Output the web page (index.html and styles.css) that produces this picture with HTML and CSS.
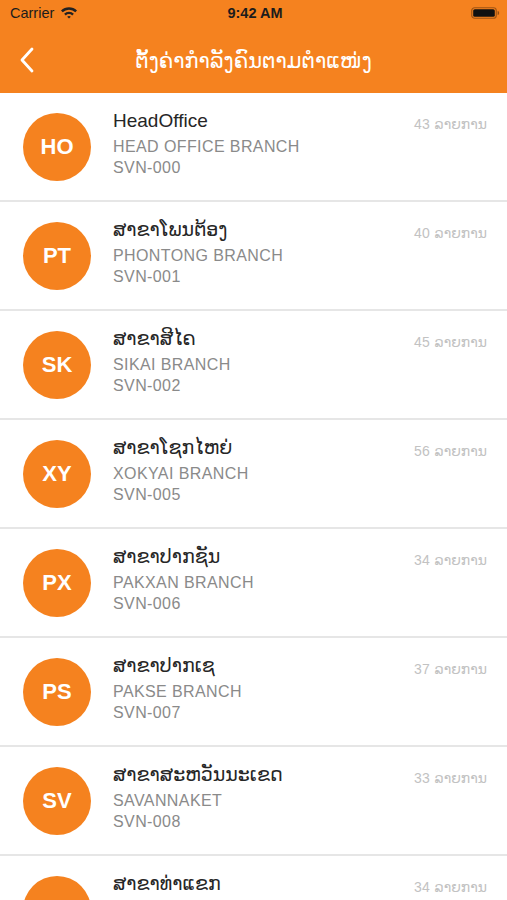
FILE: index.html
```html
<!DOCTYPE html>
<html lang="lo">
<head>
	<meta charset="UTF-8">
	<title>ຕັ້ງຄ່າກຳລັງຄົນຕາມຕຳແໜ່ງ</title>
	<link rel="stylesheet" href="styles.css">
</head>
<body>
	<div class="top">
		<div class="status-bar">
			<div class="carrier">
				Carrier
				<svg class="wifi" width="18" height="13" viewBox="0 0 18 13">
					<path d="M1 4.6 A11.5 11.5 0 0 1 17 4.6 L15.3 6.3 A9 9 0 0 0 2.7 6.3 Z" fill="#222"/>
					<path d="M4.1 7.7 A7 7 0 0 1 13.9 7.7 L12.2 9.4 A4.6 4.6 0 0 0 5.8 9.4 Z" fill="#222"/>
					<path d="M7.2 10.8 A2.6 2.6 0 0 1 10.8 10.8 L9 12.6 Z" fill="#222"/>
				</svg>
			</div>
			<div class="time">9:42 AM</div>
			<div class="battery">
				<svg width="29" height="12" viewBox="0 0 29 12">
					<rect x="0.75" y="0.75" width="24.5" height="10.5" rx="2.8" fill="none" stroke="rgba(0,0,0,0.35)" stroke-width="1.2"/>
					<rect x="2.2" y="2.2" width="21.6" height="7.6" rx="1.6" fill="#111"/>
					<path d="M26.6 4 a1.6 2 0 0 1 0 4 Z" fill="rgba(0,0,0,0.4)"/>
				</svg>
			</div>
		</div>
		<div class="nav-bar">
			<a href="" class="back">
				<svg width="16" height="26" viewBox="0 0 16 26">
					<path d="M13 2 L3 13 L13 24" fill="none" stroke="#fff" stroke-width="2.8" stroke-linecap="round" stroke-linejoin="round"/>
				</svg>
			</a>
			<div class="nav-title">ຕັ້ງຄ່າກຳລັງຄົນຕາມຕຳແໜ່ງ</div>
		</div>
	</div>

	<ul class="branch-list">
		<li class="branch">
			<div class="avatar">HO</div>
			<div class="info">
				<div class="name">HeadOffice</div>
				<div class="sub">HEAD OFFICE BRANCH</div>
				<div class="sub">SVN-000</div>
			</div>
			<div class="count">43 <span>ລາຍການ</span></div>
		</li>
		<li class="branch">
			<div class="avatar">PT</div>
			<div class="info">
				<div class="name">ສາຂາໂພນຕ້ອງ</div>
				<div class="sub">PHONTONG BRANCH</div>
				<div class="sub">SVN-001</div>
			</div>
			<div class="count">40 <span>ລາຍການ</span></div>
		</li>
		<li class="branch">
			<div class="avatar">SK</div>
			<div class="info">
				<div class="name">ສາຂາສີໄຄ</div>
				<div class="sub">SIKAI BRANCH</div>
				<div class="sub">SVN-002</div>
			</div>
			<div class="count">45 <span>ລາຍການ</span></div>
		</li>
		<li class="branch">
			<div class="avatar">XY</div>
			<div class="info">
				<div class="name">ສາຂາໂຊກໄຫຍ່</div>
				<div class="sub">XOKYAI BRANCH</div>
				<div class="sub">SVN-005</div>
			</div>
			<div class="count">56 <span>ລາຍການ</span></div>
		</li>
		<li class="branch">
			<div class="avatar">PX</div>
			<div class="info">
				<div class="name">ສາຂາປາກຊັນ</div>
				<div class="sub">PAKXAN BRANCH</div>
				<div class="sub">SVN-006</div>
			</div>
			<div class="count">34 <span>ລາຍການ</span></div>
		</li>
		<li class="branch">
			<div class="avatar">PS</div>
			<div class="info">
				<div class="name">ສາຂາປາກເຊ</div>
				<div class="sub">PAKSE BRANCH</div>
				<div class="sub">SVN-007</div>
			</div>
			<div class="count">37 <span>ລາຍການ</span></div>
		</li>
		<li class="branch">
			<div class="avatar">SV</div>
			<div class="info">
				<div class="name">ສາຂາສະຫວັນນະເຂດ</div>
				<div class="sub">SAVANNAKET</div>
				<div class="sub">SVN-008</div>
			</div>
			<div class="count">33 <span>ລາຍການ</span></div>
		</li>
		<li class="branch">
			<div class="avatar"></div>
			<div class="info">
				<div class="name">ສາຂາທ່າແຂກ</div>
			</div>
			<div class="count">34 <span>ລາຍການ</span></div>
		</li>
	</ul>
</body>
</html>
```

FILE: styles.css
```css
/* reset */
* {
	margin: 0;
	padding: 0;
	box-sizing: border-box;
}
body {
	width: 507px;
	height: 900px;
	overflow: hidden;
	font-family: "Liberation Sans", "DejaVu Sans", sans-serif;
	background: #fff;
}
.top {
	background: #f5821f;
}
.status-bar {
	height: 28px;
	display: flex;
	align-items: center;
	justify-content: space-between;
	padding: 0 7px 2px 10px;
	font-size: 14.5px;
	color: #1c1c1c;
}
.carrier {
	width: 120px;
	display: flex;
	align-items: center;
	gap: 6px;
}
.wifi {
	margin-top: -1px;
}
.time {
	font-weight: bold;
}
.battery {
	width: 120px;
	display: flex;
	justify-content: flex-end;
}
.nav-bar {
	height: 65px;
	display: flex;
	align-items: center;
	position: relative;
	padding-left: 19px;
}
.back {
	display: flex;
	margin-top: -1px;
}
.nav-title {
	position: absolute;
	left: 0;
	right: 0;
	text-align: center;
	color: #fff;
	font-size: 21px;
	pointer-events: none;
}
.branch-list {
	list-style: none;
}
.branch {
	height: 109px;
	display: flex;
	padding: 0 20px 0 23px;
	border-bottom: 2px solid #e6e6e6;
}
.avatar {
	width: 68px;
	height: 68px;
	align-self: center;
	border-radius: 50%;
	background: #f5821f;
	color: #fff;
	font-size: 22px;
	font-weight: bold;
	display: flex;
	align-items: center;
	justify-content: center;
	flex-shrink: 0;
}
.info {
	flex: 1;
	padding: 16px 0 0 22px;
}
.name {
	font-size: 19px;
	line-height: 24px;
	color: #262626;
	margin-bottom: 3px;
}
.sub {
	font-size: 16px;
	line-height: 21px;
	letter-spacing: 0.4px;
	color: #8a8a8a;
}
.count {
	padding-top: 22px;
	font-size: 14px;
	line-height: 18px;
	color: #c2c2c2;
}
.count span {
	margin-left: 1px;
}
```
